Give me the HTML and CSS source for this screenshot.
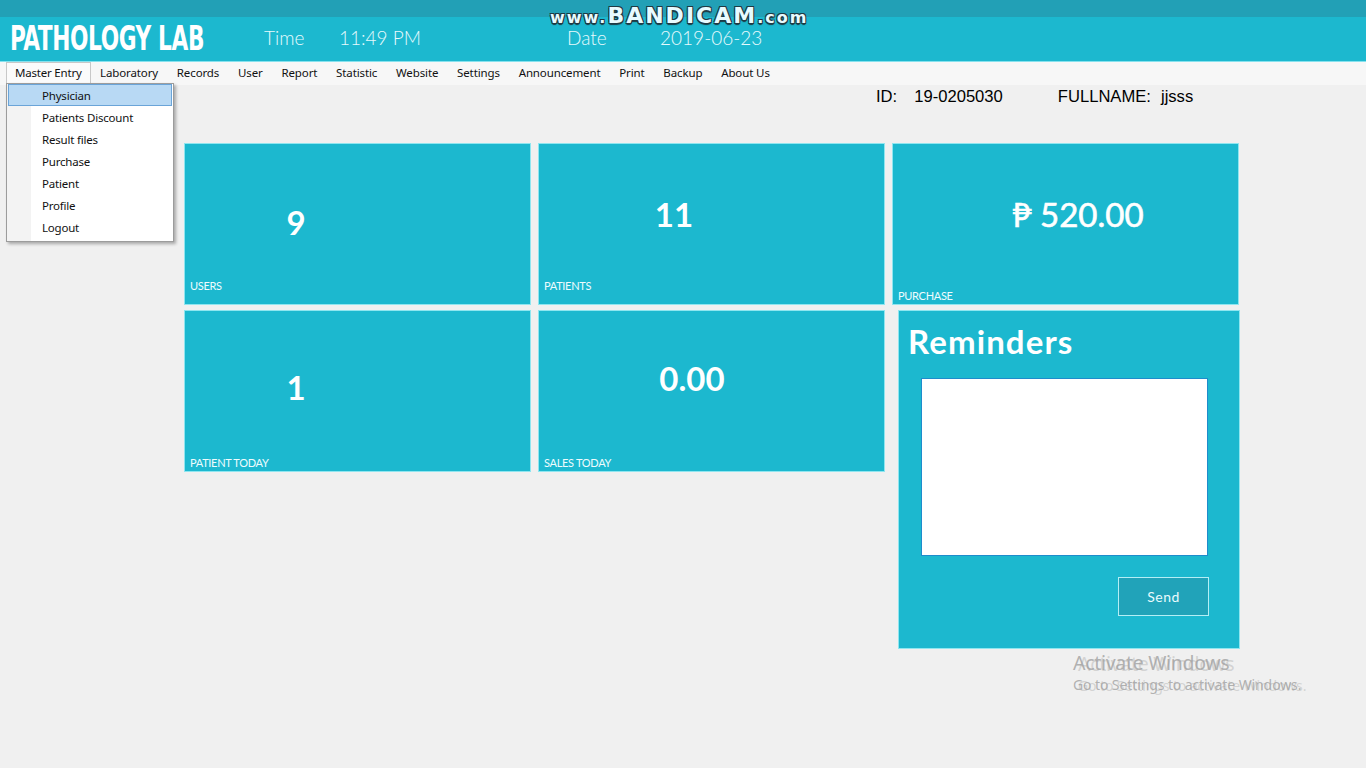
FILE: index.html
```html
<!DOCTYPE html>
<html>
<head>
<meta charset="utf-8">
<title>Pathology Lab</title>
<link rel="stylesheet" href="styles.css">
</head>
<body>
<div class="topstrip">
  <div class="bandicam"><span class="bc-small">www.</span>BANDICAM<span class="bc-small">.com</span></div>
</div>
<header class="header">
  <div class="brand">PATHOLOGY LAB</div>
  <div class="clock">
    <span class="clock-label">Time</span>
    <span class="clock-value">11:49 PM</span>
  </div>
  <div class="clock clock-date">
    <span class="clock-label">Date</span>
    <span class="clock-value">2019-06-23</span>
  </div>
</header>
<nav class="menubar">
  <span class="menu-item menu-open">Master Entry</span>
  <span class="menu-item">Laboratory</span>
  <span class="menu-item">Records</span>
  <span class="menu-item">User</span>
  <span class="menu-item">Report</span>
  <span class="menu-item">Statistic</span>
  <span class="menu-item">Website</span>
  <span class="menu-item">Settings</span>
  <span class="menu-item">Announcement</span>
  <span class="menu-item">Print</span>
  <span class="menu-item">Backup</span>
  <span class="menu-item">About Us</span>
</nav>
<ul class="dropdown">
  <li class="dd-item dd-active">Physician</li>
  <li class="dd-item">Patients Discount</li>
  <li class="dd-item">Result files</li>
  <li class="dd-item">Purchase</li>
  <li class="dd-item">Patient</li>
  <li class="dd-item">Profile</li>
  <li class="dd-item">Logout</li>
</ul>
<main class="main">
  <div class="userinfo">
    <span class="ui-label">ID:</span><span class="ui-value">19-0205030</span>
    <span class="ui-label ui-gap">FULLNAME:</span><span class="ui-value">jjsss</span>
  </div>
  <section class="dashboard">
    <div class="tile">
      <div class="tile-num num-users">9</div>
      <div class="tile-label label-high">USERS</div>
    </div>
    <div class="tile">
      <div class="tile-num num-patients">11</div>
      <div class="tile-label label-high">PATIENTS</div>
    </div>
    <div class="tile">
      <div class="tile-num num-purchase">₱ 520.00</div>
      <div class="tile-label">PURCHASE</div>
    </div>
    <div class="tile">
      <div class="tile-num num-today">1</div>
      <div class="tile-label">PATIENT TODAY</div>
    </div>
    <div class="tile">
      <div class="tile-num num-sales">0.00</div>
      <div class="tile-label">SALES TODAY</div>
    </div>
    <div class="reminders">
      <h2 class="rem-title">Reminders</h2>
      <textarea class="rem-text"></textarea>
      <div class="rem-actions"><button class="rem-send">Send</button></div>
    </div>
  </section>
</main>
<div class="activate">
  <div class="act-title">Activate Windows</div>
  <div class="act-sub">Go to Settings to activate Windows.</div>
</div>
</body>
</html>
```
FILE: styles.css
```css
html, body {
  margin: 0;
  padding: 0;
}
body {
  width: 1366px;
  height: 768px;
  overflow: hidden;
  background: #f0f0f0;
  font-family: "Noto Sans", "DejaVu Sans", sans-serif;
  position: relative;
}
.topstrip {
  height: 17px;
  background: #22a0b6;
}
.bandicam {
  position: absolute;
  left: 550px;
  top: 8px;
  font-family: "DejaVu Sans", sans-serif;
  font-weight: bold;
  font-size: 22px;
  line-height: 16px;
  color: #e8fbff;
  letter-spacing: 2px;
  white-space: nowrap;
  text-shadow: -1px -1px 0 #1d3a44, 1px -1px 0 #1d3a44, -1px 1px 0 #1d3a44, 1px 1px 0 #1d3a44, 0 2px 1px #1d3a44;
}
.bc-small {
  font-size: 16px;
  letter-spacing: 2px;
}
.header {
  height: 44px;
  background: #1cb8cf;
  border-bottom: 1px solid #86e2ee;
  display: flex;
  align-items: center;
  color: #fff;
}
.brand {
  font-family: "Liberation Sans Narrow", "DejaVu Sans Condensed", sans-serif;
  font-weight: bold;
  font-size: 33px;
  line-height: 40px;
  margin-left: 10px;
  width: 194px;
  letter-spacing: -0.5px;
  transform: scaleX(0.73);
  transform-origin: left center;
  white-space: nowrap;
}
.clock {
  font-family: Lato, "Open Sans", sans-serif;
  font-weight: 300;
  font-size: 19px;
  line-height: 19px;
  color: #e6fafd;
  display: flex;
  margin-left: 60px;
  margin-bottom: 4px;
}
.clock-label {
  width: 75px;
}
.clock-date {
  margin-left: 146px;
}
.clock-date .clock-label {
  width: 93px;
}
.menubar {
  height: 23px;
  background: #f7f7f7;
  display: flex;
  align-items: stretch;
  padding-left: 6px;
  font-size: 11.5px;
  line-height: 18px;
  color: #111;
}
.menu-item {
  display: flex;
  align-items: flex-start;
  padding: 1px 8.4px 0 8.4px;
  border: 1px solid transparent;
  border-bottom: none;
  letter-spacing: -0.12px;
}
.menu-open {
  border-color: #c8c8c8;
  background: #fbfbfb;
  padding: 1px 8px 0 8px;
  letter-spacing: -0.2px;
}
.dropdown {
  position: absolute;
  left: 6px;
  top: 83px;
  width: 166px;
  margin: 0;
  padding: 0 0 3px 0;
  list-style: none;
  background: linear-gradient(to right, #f3f3f3 0, #f3f3f3 24px, #fff 24px);
  border: 1px solid #9c9c9c;
  box-shadow: 2px 2px 3px rgba(0, 0, 0, 0.3);
  font-size: 11.5px;
  color: #111;
  letter-spacing: -0.2px;
}
.dd-item {
  height: 22px;
  line-height: 19px;
  padding-top: 1px;
  padding-left: 33px;
  margin: 0 1px;
  border: 1px solid transparent;
  box-sizing: border-box;
}
.dd-active {
  background: #b8d9f4;
  border-color: #6aa4d8;
}
.main {
  padding-top: 2px;
}
.userinfo {
  margin-left: 876px;
  height: 20px;
  display: flex;
  align-items: center;
  font-family: "Liberation Sans", Arial, sans-serif;
  font-size: 16.6px;
  color: #000;
}
.ui-label {
  margin-right: 17px;
}
.ui-value {
  letter-spacing: 0;
}
.ui-gap {
  margin-left: 55px;
  margin-right: 10px;
}
.dashboard {
  margin-top: 36px;
  margin-left: 184px;
  display: grid;
  grid-template-columns: 347px 347px 347px;
  grid-template-rows: 162px 162px;
  column-gap: 7px;
  row-gap: 5px;
}
.tile {
  background: #1cb8cf;
  border: 1px solid #8fe6f0;
  box-sizing: border-box;
  display: flex;
  flex-direction: column;
  color: #fff;
  font-family: Lato, "Open Sans", sans-serif;
}
.tile-num {
  font-weight: bold;
  font-size: 33px;
  line-height: 34px;
  align-self: flex-start;
  transform: translateX(-50%);
}
.num-users { margin-top: 61px; margin-left: 111px; }
.num-patients { margin-top: 53px; margin-left: 135px; }
.num-purchase { margin-top: 53px; margin-left: 185px; font-weight: normal; -webkit-text-stroke: 0.6px #fff; }
.num-today { margin-top: 59px; margin-left: 111px; }
.num-sales { margin-top: 50px; margin-left: 153px; }
.tile-label {
  margin-top: auto;
  margin-left: 5px;
  margin-bottom: 1px;
  font-size: 11px;
  line-height: 14px;
  letter-spacing: -0.3px;
  color: #eefcfe;
}
.label-high {
  margin-bottom: 11px;
}
.reminders {
  grid-column: 3;
  grid-row: 2;
  margin-left: 6px;
  width: 342px;
  height: 339px;
  background: #1cb8cf;
  border: 1px solid #8fe6f0;
  box-sizing: border-box;
  display: flex;
  flex-direction: column;
  color: #fff;
  font-family: Lato, "Open Sans", sans-serif;
}
.rem-title {
  margin: 12px 0 0 9px;
  font-size: 33px;
  line-height: 36px;
  font-weight: bold;
  letter-spacing: 1.1px;
}
.rem-text {
  margin: 19px 0 0 22px;
  width: 287px;
  height: 178px;
  box-sizing: border-box;
  border: 1px solid #1e8ccc;
  background: #fff;
  resize: none;
  padding: 0;
  outline: none;
}
.rem-actions {
  display: flex;
  justify-content: flex-end;
  margin: 21px 30px 0 0;
}
.rem-send {
  width: 91px;
  height: 39px;
  background: #21a3b9;
  border: 1px solid #b4eef5;
  color: #e8fbfd;
  font-family: Lato, "Open Sans", sans-serif;
  font-size: 14px;
  letter-spacing: 0.5px;
}
.activate {
  position: absolute;
  left: 1073px;
  top: 651px;
  color: rgba(160, 160, 160, 0.8);
  font-family: "Noto Sans", "Open Sans", sans-serif;
}
.act-title {
  font-size: 19.5px;
  line-height: 24px;
  letter-spacing: -0.3px;
  text-shadow: 5px 1px 0 rgba(175, 175, 175, 0.45);
}
.act-sub {
  font-size: 14px;
  line-height: 20px;
  letter-spacing: -0.1px;
  text-shadow: 5px 1px 0 rgba(175, 175, 175, 0.45);
}
```
